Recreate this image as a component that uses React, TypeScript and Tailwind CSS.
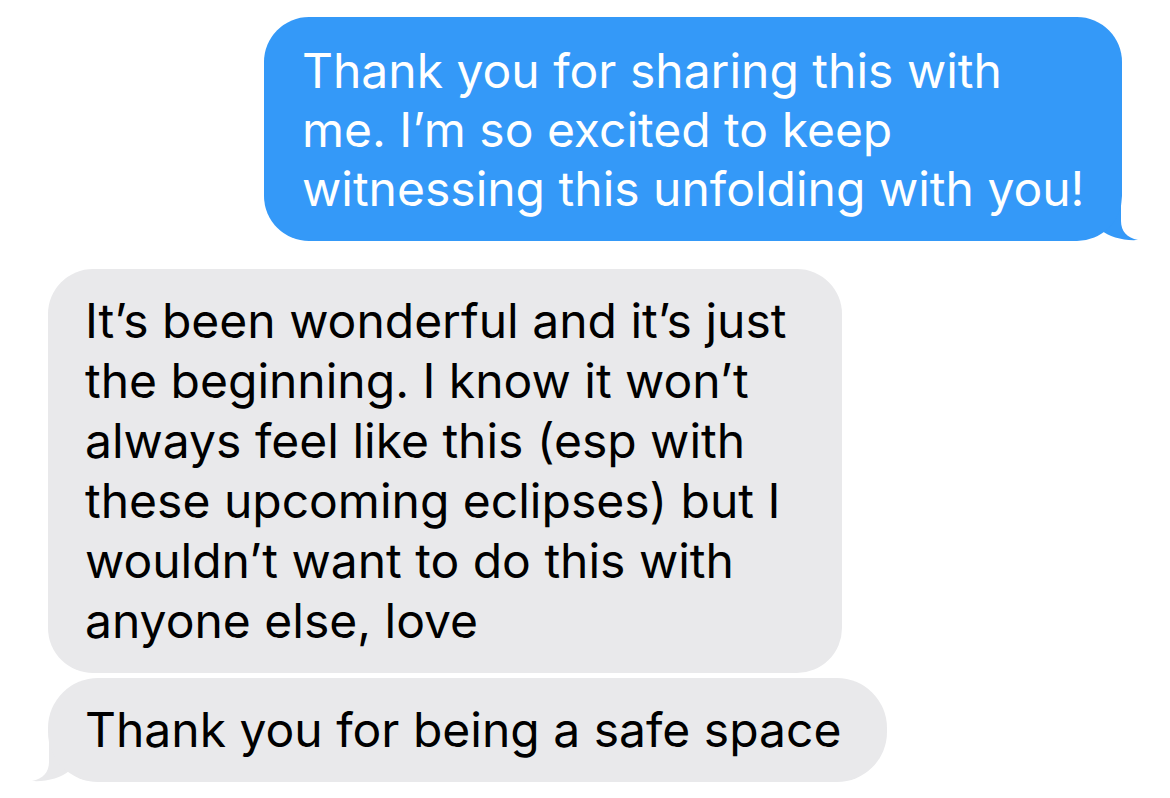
import React from "react";

const blueLines = [
  "Thank you for sharing this with",
  "me. I\u2019m so excited to keep",
  "witnessing this unfolding with you!",
];

const grayLines = [
  "It\u2019s been wonderful and it\u2019s just",
  "the beginning. I know it won\u2019t",
  "always feel like this (esp with",
  "these upcoming eclipses) but I",
  "wouldn\u2019t want to do this with",
  "anyone else, love",
];

export default function App() {
  return (
    <div
      className="w-[1170px] h-[798px] bg-white overflow-hidden"
      style={{ fontFamily: "Inter, 'Noto Sans', sans-serif" }}
    >
      <div className="flex flex-col pt-[17px]">
        {/* Blue outgoing bubble */}
        <div className="self-end mr-[48px] relative">
          <div className="relative z-10 w-[858px] h-[224px] rounded-[45px] bg-[#3499f8] text-white pl-[38px] flex flex-col justify-center text-[48px] leading-[59px] tracking-[0px]">
            {blueLines.map((l) => (
              <div key={l} className="whitespace-nowrap">
                {l}
              </div>
            ))}
          </div>
          <svg
            className="absolute right-[-17px] bottom-0 z-0"
            width="62"
            height="52"
            viewBox="1078 190 62 52"
          >
            <path
              d="M1078,190 L1122,190 L1122,222 C1122,232 1128,239 1139,241 C1125,242 1110,238 1102,231 C1096,236 1088,241 1078,241 Z"
              fill="#3499f8"
            />
          </svg>
        </div>

        {/* Gray bubble 1 */}
        <div className="ml-[48px] mt-[28px] w-[794px] h-[404px] rounded-[45px] bg-[#e9e9eb] text-black pl-[37px] flex flex-col justify-center text-[48px] leading-[60px] tracking-[0px]">
          {grayLines.map((l) => (
            <div key={l} className="whitespace-nowrap">
              {l}
            </div>
          ))}
        </div>

        {/* Gray bubble 2 with tail */}
        <div className="ml-[48px] mt-[5px] relative self-start">
          <div className="relative z-10 w-[839px] h-[104px] rounded-[50px] bg-[#e9e9eb] text-black pl-[37px] flex items-center text-[48px] leading-[60px] tracking-[0px]">
            <div className="whitespace-nowrap">Thank you for being a safe space</div>
          </div>
          <svg
            className="absolute left-[-17px] bottom-0 z-0"
            width="62"
            height="52"
            viewBox="1078 190 62 52"
            style={{ transform: "scaleX(-1)" }}
          >
            <path
              d="M1078,190 L1122,190 L1122,222 C1122,232 1128,239 1139,241 C1125,242 1110,238 1102,231 C1096,236 1088,241 1078,241 Z"
              fill="#e9e9eb"
            />
          </svg>
        </div>
      </div>
    </div>
  );
}
